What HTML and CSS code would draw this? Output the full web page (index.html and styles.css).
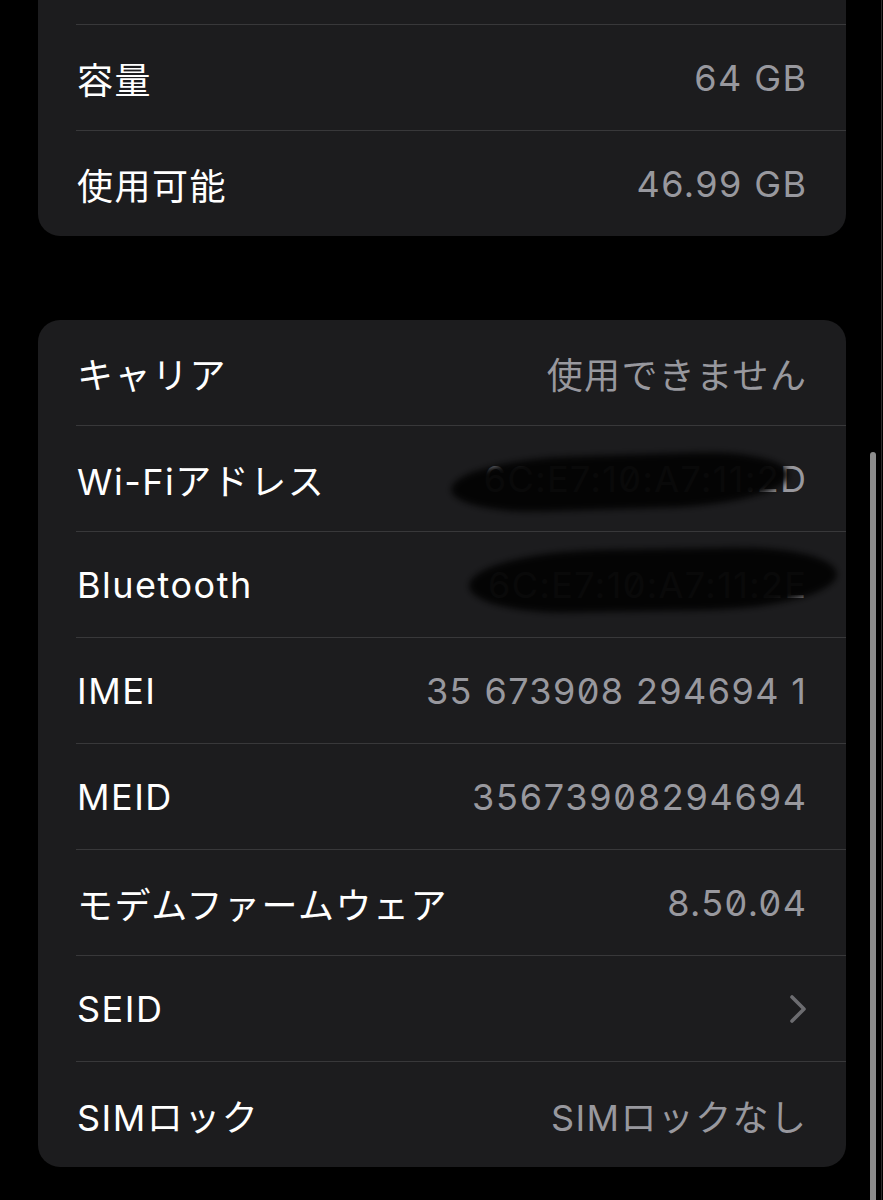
FILE: index.html
```html
<!DOCTYPE html>
<html lang="ja">
<head>
<meta charset="utf-8">
<link rel="stylesheet" href="styles.css">
</head>
<body>
<div class="screen">
  <div class="card card-top">
    <div class="row"></div>
    <div class="row"><span class="label">容量</span><span class="value">64 GB</span></div>
    <div class="row"><span class="label">使用可能</span><span class="value">46.99 GB</span></div>
  </div>
  <div class="card card-net">
    <div class="row"><span class="label">キャリア</span><span class="value">使用できません</span></div>
    <div class="row"><span class="label">Wi-Fiアドレス</span><span class="value redacted">6C:E7:10:A7:11:2D<span class="blob blob-wifi"></span></span></div>
    <div class="row"><span class="label">Bluetooth</span><span class="value redacted">6C:E7:10:A7:11:2E<span class="blob blob-bt"></span></span></div>
    <div class="row"><span class="label">IMEI</span><span class="value">35 673908 294694 1</span></div>
    <div class="row"><span class="label">MEID</span><span class="value digits">35673908294694</span></div>
    <div class="row"><span class="label">モデムファームウェア</span><span class="value">8.50.04</span></div>
    <div class="row"><span class="label">SEID</span><svg class="chevron" width="18" height="30" viewBox="0 0 18 30"><polyline points="3,3 15,15 3,27" fill="none" stroke="#6c6c70" stroke-width="3.6" stroke-linecap="round" stroke-linejoin="round"/></svg></div>
    <div class="row"><span class="label">SIMロック</span><span class="value">SIMロックなし</span></div>
  </div>
</div>
<div class="scrollbar"></div>
<div class="edge"></div>
</body>
</html>
```
FILE: styles.css
```css
html, body {
  margin: 0;
  padding: 0;
  background: #000;
  overflow: hidden;
}
body {
  font-family: "Inter", "Noto Sans CJK JP", sans-serif;
  font-size: 36px;
  color: #fff;
  font-feature-settings: "zero" 1;
}
.screen {
  padding: 0 37px 0 38px;
}
.card {
  background: #1c1c1e;
  border-radius: 22px;
  overflow: hidden;
}
.card-top {
  margin-top: -81px;
  border-top-left-radius: 0;
  border-top-right-radius: 0;
}
.card-net {
  margin-top: 84px;
}
.row {
  height: 105px;
  margin-left: 38px;
  padding: 0 40px 0 1px;
  display: flex;
  align-items: center;
  justify-content: space-between;
}
.row + .row {
  border-top: 1px solid #38383a;
}
.label {
  color: #fff;
  letter-spacing: 1.5px;
  margin-right: -1.5px;
}
.value {
  color: #98989e;
  letter-spacing: 1.4px;
  margin-right: -1.4px;
}
.digits {
  letter-spacing: 1.75px;
  margin-right: -1.75px;
}
.redacted {
  position: relative;
}
.blob {
  position: absolute;
  background: rgba(3, 3, 3, 0.96);
  filter: blur(3px);
  border-radius: 40% 30% 40% 30% / 60% 50% 60% 50%;
}
.blob-wifi {
  right: 18px;
  width: 338px;
  top: -2px;
  height: 54px;
  transform: rotate(-1.8deg);
}
.blob-bt {
  right: -30px;
  width: 368px;
  top: -14px;
  height: 62px;
  transform: rotate(-1deg);
}
.chevron {
  display: block;
  margin-right: -1px;
}
.scrollbar {
  position: fixed;
  left: 870px;
  top: 452px;
  width: 6px;
  height: 760px;
  border-radius: 3px;
  background: #8c8c8c;
}
.edge {
  position: fixed;
  left: 881px;
  top: 0;
  width: 1px;
  height: 1200px;
  background: #2c2c2c;
}
```
